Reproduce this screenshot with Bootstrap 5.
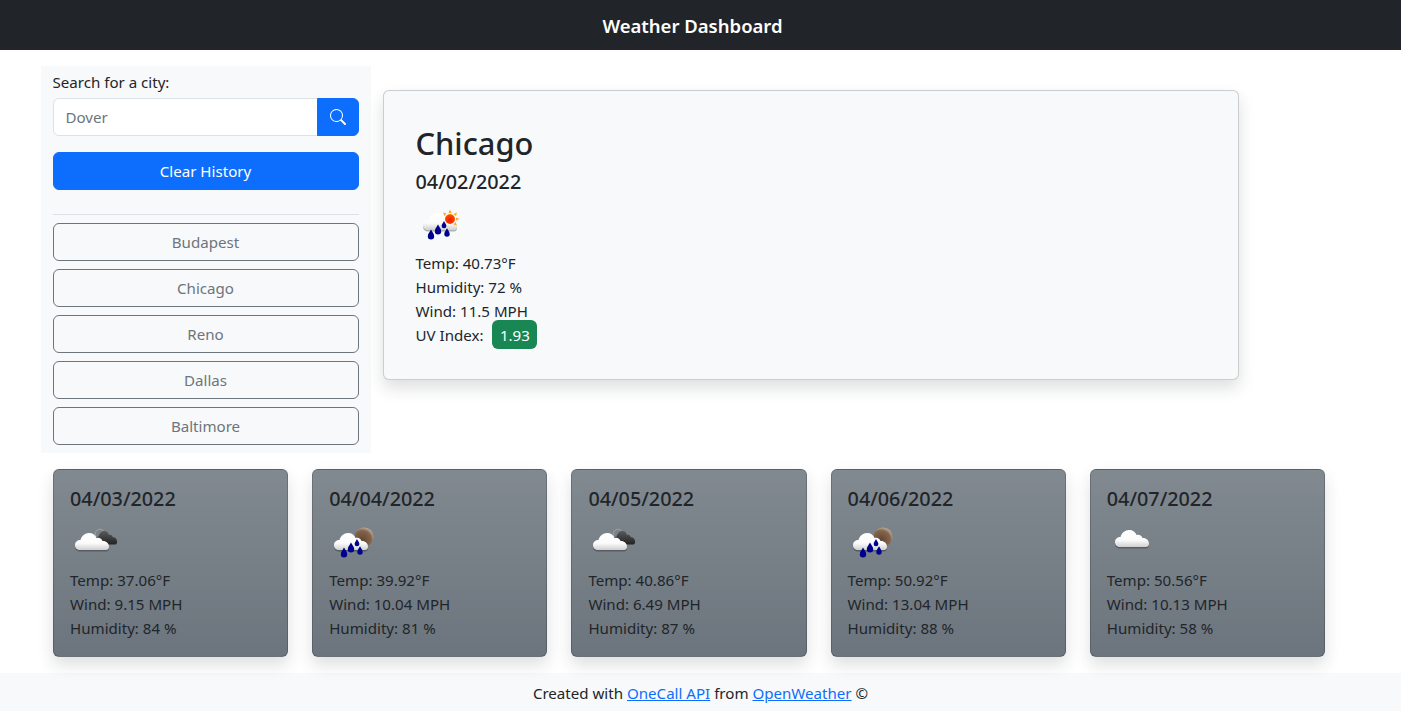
<!DOCTYPE html>
<html lang="en">
<head>
    <meta charset="UTF-8" />
    <meta name="viewport" content="width=device-width, initial-scale=1.0"/>
    <title>Weather Dashboard</title>
    <link href="https://cdn.jsdelivr.net/npm/bootstrap@5.3.0/dist/css/bootstrap.min.css" rel="stylesheet"/>
    <style>
        body {
            font-family: "Noto Sans", "Open Sans", sans-serif;
            font-size: 15.1px;
            line-height: 24px;
            color: #212529;
        }

        .app-navbar {
            height: 50px;
        }

        .app-navbar .navbar-brand {
            font-size: 18.5px;
            font-weight: 600;
            padding-top: 6px;
        }

        .btn, .form-control {
            font-size: 15.1px;
            line-height: 24px;
        }

        .form-control::placeholder {
            color: #6c757d;
        }

        .side-rule {
            border-top-color: #dee2e6;
            opacity: 1;
        }

        .current-title {
            font-size: 30.8px;
            line-height: 38px;
            font-weight: 500;
            padding-top: 1px;
            margin-bottom: 7px;
        }

        .date-title {
            font-size: 19.8px;
            line-height: 24px;
            font-weight: 500;
            padding-top: 1px;
            margin-bottom: 7px;
        }

        .main-card {
            margin-top: 24px;
        }

        .uv-badge {
            padding: 5px 7.5px 4px;
            margin-left: 5px;
        }

        .forecast-row {
            margin-left: .5px;
            margin-right: -.5px;
        }

        .weather-icon {
            display: block;
            width: 50px;
            height: 50px;
        }

        .page-footer {
            height: 38px;
            padding-top: 7px;
        }
    </style>
</head>
<body>
<svg width="0" height="0" class="position-absolute">
    <defs>
        <linearGradient id="cloudFill" x1="0" y1="0" x2="0" y2="1">
            <stop offset="0" stop-color="#ffffff"/>
            <stop offset="0.6" stop-color="#fbfbfb"/>
            <stop offset="1" stop-color="#cfcfcf"/>
        </linearGradient>
        <linearGradient id="darkFill" x1="0" y1="0" x2="0" y2="1">
            <stop offset="0" stop-color="#5a5a5a"/>
            <stop offset="1" stop-color="#222222"/>
        </linearGradient>
        <radialGradient id="moonFill" cx="0.4" cy="0.65" r="0.75">
            <stop offset="0" stop-color="#5f4636"/>
            <stop offset="0.65" stop-color="#86644c"/>
            <stop offset="1" stop-color="#d9cdc2"/>
        </radialGradient>
        <radialGradient id="sunFill" cx="0.5" cy="0.6" r="0.6">
            <stop offset="0" stop-color="#f01800"/>
            <stop offset="0.8" stop-color="#fb4a00"/>
            <stop offset="1" stop-color="#ffa000"/>
        </radialGradient>
        <path id="cloudShape" d="M5 17C1.500 17 0 14.500 0 12 0 9 2.500 7 5.500 7 6.500 3 10 0 14 0c4 0 6.500 2 7.500 5 2.500-1 5.500.5 6 3 3-.5 6.500 2 6.500 5.500 0 2-1 3.500-3 3.500z"/>
        <path id="dropShape" d="M0-5.500C.9-3.300 3.200-1.400 3.200 1.200A3.200 3.200 0 0 1-3.200 1.200C-3.200-1.400-.9-3.300 0-5.500z" fill="#00008f"/>
        <g id="whiteCloud">
            <use href="#cloudShape" fill="#000" opacity=".28" y="1.500"/>
            <use href="#cloudShape" fill="url(#cloudFill)"/>
        </g>
        <g id="rainDrops">
            <use href="#dropShape" x="15" y="35"/>
            <use href="#dropShape" x="22" y="30"/>
            <use href="#dropShape" transform="translate(28 25) scale(.75)"/>
            <use href="#dropShape" transform="translate(31 33) scale(.85)"/>
        </g>
        <g id="iconDayRain">
            <use href="#whiteCloud" x="7" y="12"/>
            <g fill="#ffa51f">
                <path d="M34 8.500l1.500 3.500h-3zM43.500 18l-3.500 1.500v-3zM27 11.500l3.500 1-2 2.500zM41 11.500l-1 3.500-2.500-2zM41 24.500l-3.500-1 2-2.500z"/>
            </g>
            <circle cx="34" cy="18" r="5" fill="url(#sunFill)"/>
            <use href="#rainDrops" y="-1"/>
        </g>
        <g id="iconNightRain">
            <circle cx="35" cy="19" r="9.500" fill="url(#moonFill)"/>
            <use href="#whiteCloud" x="5" y="15"/>
            <use href="#rainDrops"/>
        </g>
        <g id="iconBroken">
            <circle cx="30" cy="16" r="4.800" fill="none" stroke="#aaa" stroke-width=".8"/>
            <use href="#cloudShape" fill="url(#darkFill)" transform="translate(25 13) scale(.65 .8)"/>
            <use href="#whiteCloud" x="5" y="15"/>
        </g>
        <g id="iconCloud">
            <use href="#whiteCloud" x="8" y="12"/>
        </g>
    </defs>
</svg>

<nav class="navbar navbar-dark bg-dark app-navbar justify-content-center py-0">
    <span class="navbar-brand">Weather Dashboard</span>
</nav>

<main class="container-xxl mt-3">
    <div class="row">
        <aside class="col-3 bg-light pt-1">
            <label for="citySearch" class="d-block mb-1">Search for a city:</label>
            <div class="input-group">
                <input type="text" class="form-control" id="citySearch" placeholder="Dover">
                <button class="btn btn-primary" type="button" aria-label="Search">
                    <svg class="d-block" xmlns="http://www.w3.org/2000/svg" width="16" height="16" fill="currentColor" viewBox="0 0 16 16">
                        <path d="M11.742 10.344a6.5 6.5 0 1 0-1.397 1.398h-.001c.03.04.062.078.098.115l3.85 3.85a1 1 0 0 0 1.415-1.414l-3.85-3.85a1.007 1.007 0 0 0-.115-.1zM12 6.5a5.500 5.500 0 1 1-11 0 5.500 5.500 0 0 1 11 0z"/>
                    </svg>
                </button>
            </div>
            <button class="btn btn-primary w-100 mt-3" type="button">Clear History</button>
            <hr class="side-rule mt-4 mb-2">
            <button class="btn btn-outline-secondary w-100 d-block mb-2" type="button">Budapest</button>
            <button class="btn btn-outline-secondary w-100 d-block mb-2" type="button">Chicago</button>
            <button class="btn btn-outline-secondary w-100 d-block mb-2" type="button">Reno</button>
            <button class="btn btn-outline-secondary w-100 d-block mb-2" type="button">Dallas</button>
            <button class="btn btn-outline-secondary w-100 d-block mb-2" type="button">Baltimore</button>
        </aside>

        <section class="col-8">
            <div class="card bg-light shadow main-card">
                <div class="card-body p-0 m-0">
                    <div class="p-4 m-2">
                        <h2 class="current-title">Chicago</h2>
                        <h5 class="date-title">04/02/2022</h5>
                        <svg class="weather-icon" viewBox="0 0 50 50"><use href="#iconDayRain"/></svg>
                        <div>Temp: 40.73°F</div>
                        <div>Humidity: 72 %</div>
                        <div>Wind: 11.5 MPH</div>
                        <div>UV Index: <span class="uv-badge bg-success text-white rounded">1.93</span></div>
                    </div>
                </div>
            </div>
        </section>
    </div>

    <div class="row row-cols-5 g-0 mt-3 forecast-row">
        <div class="col pe-4">
            <div class="card bg-secondary bg-gradient shadow">
                <div class="card-body">
                    <h5 class="date-title">04/03/2022</h5>
                    <svg class="weather-icon" viewBox="0 0 50 50"><use href="#iconBroken"/></svg>
                    <div>Temp: 37.06°F</div>
                    <div>Wind: 9.15 MPH</div>
                    <div>Humidity: 84 %</div>
                </div>
            </div>
        </div>
        <div class="col pe-4">
            <div class="card bg-secondary bg-gradient shadow">
                <div class="card-body">
                    <h5 class="date-title">04/04/2022</h5>
                    <svg class="weather-icon" viewBox="0 0 50 50"><use href="#iconNightRain"/></svg>
                    <div>Temp: 39.92°F</div>
                    <div>Wind: 10.04 MPH</div>
                    <div>Humidity: 81 %</div>
                </div>
            </div>
        </div>
        <div class="col pe-4">
            <div class="card bg-secondary bg-gradient shadow">
                <div class="card-body">
                    <h5 class="date-title">04/05/2022</h5>
                    <svg class="weather-icon" viewBox="0 0 50 50"><use href="#iconBroken"/></svg>
                    <div>Temp: 40.86°F</div>
                    <div>Wind: 6.49 MPH</div>
                    <div>Humidity: 87 %</div>
                </div>
            </div>
        </div>
        <div class="col pe-4">
            <div class="card bg-secondary bg-gradient shadow">
                <div class="card-body">
                    <h5 class="date-title">04/06/2022</h5>
                    <svg class="weather-icon" viewBox="0 0 50 50"><use href="#iconNightRain"/></svg>
                    <div>Temp: 50.92°F</div>
                    <div>Wind: 13.04 MPH</div>
                    <div>Humidity: 88 %</div>
                </div>
            </div>
        </div>
        <div class="col pe-4">
            <div class="card bg-secondary bg-gradient shadow">
                <div class="card-body">
                    <h5 class="date-title">04/07/2022</h5>
                    <svg class="weather-icon" viewBox="0 0 50 50"><use href="#iconCloud"/></svg>
                    <div>Temp: 50.56°F</div>
                    <div>Wind: 10.13 MPH</div>
                    <div>Humidity: 58 %</div>
                </div>
            </div>
        </div>
    </div>
</main>

<footer class="page-footer bg-light text-center border-top border-light mt-3">
    Created with <a href="#">OneCall API</a> from <a href="#">OpenWeather</a> ©
</footer>
</body>
</html>
